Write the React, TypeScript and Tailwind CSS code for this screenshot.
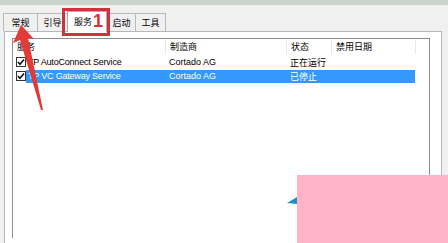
import React from "react";

const cjk = { fontFamily: '"Noto Sans CJK SC", "Liberation Sans", sans-serif' };
const latin = { fontFamily: '"Liberation Sans", "Noto Sans CJK SC", sans-serif' };

const tabs = [
  { label: "常规", w: "w-[34px]" },
  { label: "引导", w: "w-[30px]" },
  { label: "服务", w: "w-[40px]", active: true },
  { label: "启动", w: "w-[28px]" },
  { label: "工具", w: "w-[31px]" },
];

const services = [
  { name: "TP AutoConnect Service", maker: "Cortado AG", state: "正在运行" },
  { name: "TP VC Gateway Service", maker: "Cortado AG", state: "已停止", selected: true },
];

function Check() {
  return (
    <div className="w-[10px] h-[10px] border border-[#333] bg-white flex items-center justify-center shrink-0">
      <svg width="8" height="8" viewBox="0 0 8 8">
        <path d="M1 4 L3 6.2 L7 1.5" fill="none" stroke="#111" strokeWidth="1.6" />
      </svg>
    </div>
  );
}

export default function App() {
  return (
    <div className="relative w-[448px] h-[243px] overflow-hidden bg-[#f0f0f0] text-[9px] text-[#000]" style={cjk}>
      <div className="h-[5px] bg-[#c6d4cb]" />

      {/* tabs */}
      <div className="flex items-end pl-[3px] mt-[5px] h-[21px]">
        {tabs.map(t => (
          <div
            key={t.label}
            className={
              t.active
                ? `${t.w} h-[21px] -mb-px z-10 bg-white border border-b-0 border-[#adadad] flex items-center pl-[6px]`
                : `${t.w} h-[18px] bg-[#f0f0f0] border border-b-0 border-r-0 last:border-r border-[#b9b9b9] flex items-center justify-center`
            }
          >
            {t.label}
          </div>
        ))}
      </div>

      {/* tab panel */}
      <div className="mx-[4px] mr-[6px] h-[220px] bg-white border border-[#b8b8b8] pt-[6px] pl-[7px] pr-[11px]">
        <div className="h-[200px] border border-[#8e8e8e] border-b-0">
          {/* header */}
          <div className="grid grid-cols-[153px_121px_45px_84px_1fr] h-[16px] items-center">
            <div className="pl-[4px] border-r border-[#e8e8e8]">服务</div>
            <div className="pl-[4px] border-r border-[#e8e8e8]">制造商</div>
            <div className="pl-[4px] border-r border-[#e8e8e8]">状态</div>
            <div className="pl-[4px] border-r border-[#e8e8e8]">禁用日期</div>
            <div />
          </div>
          {services.map(s => (
            <div key={s.name} className="flex items-center h-[14px] pl-[3px]">
              <Check />
              <div
                className={`grid grid-cols-[139px_121px_45px_84px] h-[13px] items-center ${
                  s.selected ? "bg-[#3399ff] text-white" : ""
                }`}
              >
                <div className="pl-[2px] whitespace-nowrap tracking-[-0.2px]" style={latin}>{s.name}</div>
                <div className="pl-[4px] whitespace-nowrap" style={latin}>{s.maker}</div>
                <div className="pl-[4px] whitespace-nowrap">{s.state}</div>
                <div />
              </div>
            </div>
          ))}
        </div>
      </div>

      {/* annotation: red box + number */}
      <div className="absolute z-20 left-[62px] top-[8px] w-[48px] h-[28px] border-[3px] border-[#c8353d]" />
      <div className="absolute z-20 left-[93px] top-[9px] text-[18px] leading-[24px] font-bold text-[#d7313a]" style={latin}>1</div>

      {/* annotation: red arrow and cursor */}
      <svg className="absolute z-20 left-0 top-0" width="448" height="243" viewBox="0 0 448 243">
        <path d="M21 25 L13 43 L20 40 L41 110 L43 110 L28 38 L34 39 Z" fill="#e23a36" />
        <path d="M287 203 L297 197 L297 204 Z" fill="#1f8fc4" />
      </svg>

      {/* pink overlay */}
      <div className="absolute z-20 left-[297px] top-[175px] w-[151px] h-[68px] bg-[#ffb3c8]" />
    </div>
  );
}
